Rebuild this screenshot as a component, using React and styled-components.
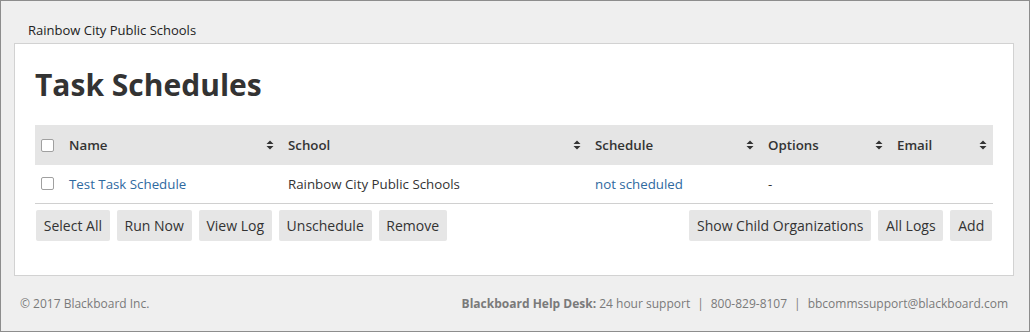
import React from 'react';
import styled, { createGlobalStyle } from 'styled-components';

const GlobalStyle = createGlobalStyle`
  html, body {
    margin: 0;
    padding: 0;
    background: #efefef;
  }
  body {
    font-family: "Open Sans", "Liberation Sans", sans-serif;
    color: #333;
  }
`;

const Frame = styled.div`
  width: 1030px;
  height: 332px;
  box-sizing: border-box;
  border: 1px solid #8d8d8d;
  background: #efefef;
  padding: 20px 15px 0 13px;
  display: flex;
  flex-direction: column;
`;

const OrgLabel = styled.div`
  font-size: 13px;
  line-height: 18px;
  color: #222;
  padding-left: 14px;
  margin-bottom: 4px;
`;

const Panel = styled.div`
  width: 1000px;
  height: 233px;
  box-sizing: border-box;
  background: #fff;
  border: 1px solid #d2d2d2;
  padding: 23px 20px 0 20px;
`;

const Title = styled.h1`
  margin: 0 0 22px 0;
  font-size: 30px;
  line-height: 36px;
  font-weight: 700;
  color: #333;
`;

const Table = styled.table`
  width: 958px;
  border-collapse: collapse;
  table-layout: fixed;
  font-size: 13.3px;
`;

const HeadRow = styled.tr`
  background: #e5e5e5;
  height: 40px;
`;

const BodyRow = styled.tr`
  height: 38px;
  border-bottom: 1px solid #d0d0d0;
`;

const Th = styled.th`
  padding: 0 6px 0 8px;
  text-align: left;
  font-weight: 600;
  color: #333;
`;

const ThInner = styled.div`
  display: flex;
  align-items: center;
  justify-content: space-between;
`;

const Td = styled.td`
  padding: 0 8px;
  color: ${(p) => (p.$link ? '#2f6a9f' : '#333')};
`;

const CheckCell = styled.td`
  padding: 0 0 0 6px;
`;

const CheckHead = styled.th`
  padding: 0 0 0 6px;
  text-align: left;
`;

const Box = styled.span`
  display: block;
  width: 11px;
  height: 11px;
  border: 1px solid #a0a0a0;
  border-radius: 2px;
  background: #fff;
`;

const Actions = styled.div`
  display: flex;
  justify-content: space-between;
  margin-top: 6px;
  padding: 0 1px;
`;

const Group = styled.div`
  display: flex;
  gap: 7px;
`;

const Button = styled.button`
  font-family: "Open Sans", "Liberation Sans", sans-serif;
  font-size: 14px;
  color: #333;
  background: #e6e6e6;
  border: none;
  border-radius: 2px;
  height: 31px;
  padding: 0 7.8px;
  cursor: pointer;
`;

const Footer = styled.div`
  display: flex;
  justify-content: space-between;
  align-items: center;
  height: 55px;
  padding: 0 6px;
  font-size: 12px;
  color: #7a7a7a;
`;

const Strong = styled.b`
  font-weight: 700;
`;

const Sep = styled.span`
  margin: 0 7px;
`;

const SortIcon = () => (
  <svg width="8" height="10" viewBox="0 0 8 10">
    <path d="M4 0.5 L7.5 4 L0.5 4 Z M4 9.5 L7.5 6 L0.5 6 Z" fill="#333" />
  </svg>
);

const columns = [
  { key: 'name', label: 'Name', width: 219 },
  { key: 'school', label: 'School', width: 307 },
  { key: 'schedule', label: 'Schedule', width: 173 },
  { key: 'options', label: 'Options', width: 129 },
  { key: 'email', label: 'Email', width: 104 },
];

export default function App() {
  return (
    <>
      <GlobalStyle />
      <Frame>
        <OrgLabel>Rainbow City Public Schools</OrgLabel>
        <Panel>
          <Title>Task Schedules</Title>
          <Table>
            <colgroup>
              <col style={{ width: 26 }} />
              {columns.map((c) => (
                <col key={c.key} style={{ width: c.width }} />
              ))}
            </colgroup>
            <thead>
              <HeadRow>
                <CheckHead>
                  <Box />
                </CheckHead>
                {columns.map((c) => (
                  <Th key={c.key}>
                    <ThInner>
                      <span>{c.label}</span>
                      <SortIcon />
                    </ThInner>
                  </Th>
                ))}
              </HeadRow>
            </thead>
            <tbody>
              <BodyRow>
                <CheckCell>
                  <Box />
                </CheckCell>
                <Td $link>Test Task Schedule</Td>
                <Td>Rainbow City Public Schools</Td>
                <Td $link>not scheduled</Td>
                <Td>-</Td>
                <Td></Td>
              </BodyRow>
            </tbody>
          </Table>
          <Actions>
            <Group>
              <Button>Select All</Button>
              <Button>Run Now</Button>
              <Button>View Log</Button>
              <Button>Unschedule</Button>
              <Button>Remove</Button>
            </Group>
            <Group>
              <Button>Show Child Organizations</Button>
              <Button>All Logs</Button>
              <Button>Add</Button>
            </Group>
          </Actions>
        </Panel>
        <Footer>
          <span>© 2017 Blackboard Inc.</span>
          <span>
            <Strong>Blackboard Help Desk:</Strong> 24 hour support
            <Sep>|</Sep>800-829-8107<Sep>|</Sep>bbcommssupport@blackboard.com
          </span>
        </Footer>
      </Frame>
    </>
  );
}
